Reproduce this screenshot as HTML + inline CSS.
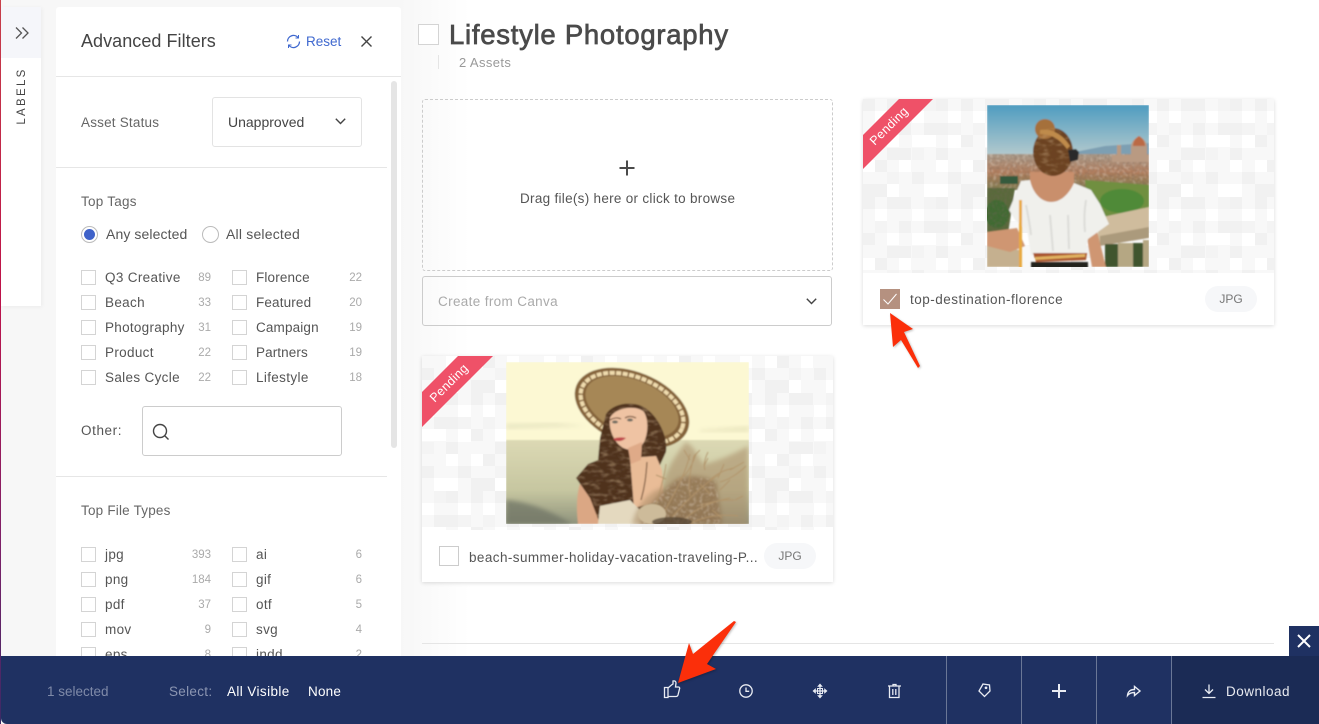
<!DOCTYPE html>
<html><head><meta charset="utf-8"><style>
html,body{margin:0;padding:0;width:1319px;height:724px;overflow:hidden;background:#fff;font-family:"Liberation Sans",sans-serif}
.a{position:absolute}
.t{position:absolute;white-space:nowrap;line-height:20px;height:20px;font-size:13.5px;color:#555;margin-top:1px;letter-spacing:.33px}
.c{position:absolute;font-size:11.5px;color:#aaa;line-height:20px;height:20px;text-align:right;width:40px;margin-top:1px}
.b{position:absolute;width:13px;height:13px;border:1px solid #d4d4d4;background:#fff}
.w{color:#fff}
</style></head><body>
<div class="a" style="left:0;top:0;width:470px;height:724px;background:linear-gradient(90deg,#f7f7f7 0,#f7f7f7 400px,#fff 470px)"></div>
<div class="a" style="left:0;top:0;width:1px;height:724px;background:linear-gradient(180deg,#c9404a 0,#c0134a 40%,#7e2068 75%,#3b2a66 100%)"></div>
<!-- labels panel -->
<div class="a" style="left:1px;top:7px;width:40px;height:299px;background:#fff;box-shadow:1px 1px 4px rgba(0,0,0,.05)"></div>
<div class="a" style="left:1px;top:7px;width:40px;height:51px;background:#f5f6fa"></div>
<svg class="a" style="left:15px;top:26px" width="16" height="14" fill="none" stroke="#555" stroke-width="1.3"><path d="M1 1.5l5.5 5.5L1 12.500M7.500 1.500L13 7l-5.500 5.500"/></svg>
<div class="t" style="left:-8px;top:86px;width:60px;text-align:center;font-size:11.500px;letter-spacing:2.300px;color:#444;transform:rotate(-90deg);margin-top:0">LABELS</div>
<!-- filter panel -->
<div class="a" style="left:56px;top:7px;width:345px;height:660px;background:#fff;border-radius:3px 3px 0 0"></div>
<div class="a" style="left:56px;top:76px;width:345px;height:1px;background:#e6e6e6"></div>
<div class="a" style="left:56px;top:167px;width:331px;height:1px;background:#e6e6e6"></div>
<div class="a" style="left:56px;top:476px;width:331px;height:1px;background:#e6e6e6"></div>
<div class="a" style="left:391px;top:81px;width:6px;height:367px;background:#e5e5e5;border-radius:3px"></div>
<div class="t" style="left:81px;top:31px;font-size:18px;color:#444;letter-spacing:.05px;margin-top:0">Advanced Filters</div>
<svg class="a" style="left:286px;top:34px" width="15" height="15" fill="none" stroke="#3f68cf" stroke-width="1.300"><path d="M1.500 7.500a6 6 0 0 1 10.500-4M13.500 7.500a6 6 0 0 1-10.500 4"/><path d="M12.500 1v3h-3M2.500 14v-3h3" stroke-width="1"/></svg>
<div class="t" style="left:306px;top:31px;font-size:13.500px;color:#3f68cf;letter-spacing:0">Reset</div>
<svg class="a" style="left:361px;top:36px" width="11" height="11" stroke="#444" stroke-width="1.400"><path d="M.5.500l10 10M10.500.500l-10 10"/></svg>
<div class="t" style="left:81px;top:112px;color:#666;letter-spacing:.2px">Asset Status</div>
<div class="a" style="left:212px;top:97px;width:148px;height:48px;border:1px solid #e3e3e3;border-radius:3px"></div>
<div class="t" style="left:228px;top:112px;color:#444;font-size:14px;margin-top:0;letter-spacing:0">Unapproved</div>
<svg class="a" style="left:335px;top:118px" width="11" height="7" fill="none" stroke="#444" stroke-width="1.400"><path d="M.8.800l4.700 4.700L10.200.800"/></svg>
<div class="t" style="left:81px;top:191px;color:#666;letter-spacing:.25px">Top Tags</div>
<div class="a" style="left:81px;top:226px;width:15px;height:15px;border:1px solid #bbb;border-radius:50%"></div>
<div class="a" style="left:84px;top:229px;width:11px;height:11px;background:#3f62c9;border-radius:50%"></div>
<div class="t" style="left:106px;top:224px;color:#555;font-size:14px;margin-top:0;letter-spacing:.1px">Any selected</div>
<div class="a" style="left:202px;top:226px;width:15px;height:15px;border:1px solid #bbb;border-radius:50%"></div>
<div class="t" style="left:226px;top:224px;color:#555;font-size:14px;margin-top:0;letter-spacing:.2px">All selected</div>

<div class="b" style="left:81px;top:270px"></div><div class="t" style="left:105px;top:267px">Q3 Creative</div><div class="c" style="left:171px;top:267px">89</div>
<div class="b" style="left:232px;top:270px"></div><div class="t" style="left:256px;top:267px;letter-spacing:.15px">Florence</div><div class="c" style="left:322px;top:267px">22</div>
<div class="b" style="left:81px;top:295px"></div><div class="t" style="left:105px;top:292px">Beach</div><div class="c" style="left:171px;top:292px">33</div>
<div class="b" style="left:232px;top:295px"></div><div class="t" style="left:256px;top:292px;letter-spacing:.15px">Featured</div><div class="c" style="left:322px;top:292px">20</div>
<div class="b" style="left:81px;top:320px"></div><div class="t" style="left:105px;top:317px;letter-spacing:.28px">Photography</div><div class="c" style="left:171px;top:317px">31</div>
<div class="b" style="left:232px;top:320px"></div><div class="t" style="left:256px;top:317px;letter-spacing:.15px">Campaign</div><div class="c" style="left:322px;top:317px">19</div>
<div class="b" style="left:81px;top:345px"></div><div class="t" style="left:105px;top:342px">Product</div><div class="c" style="left:171px;top:342px">22</div>
<div class="b" style="left:232px;top:345px"></div><div class="t" style="left:256px;top:342px;letter-spacing:.1px">Partners</div><div class="c" style="left:322px;top:342px">19</div>
<div class="b" style="left:81px;top:370px"></div><div class="t" style="left:105px;top:367px">Sales Cycle</div><div class="c" style="left:171px;top:367px">22</div>
<div class="b" style="left:232px;top:370px"></div><div class="t" style="left:256px;top:367px;letter-spacing:.35px">Lifestyle</div><div class="c" style="left:322px;top:367px">18</div>

<div class="t" style="left:81px;top:420px;letter-spacing:.6px">Other:</div>
<div class="a" style="left:142px;top:406px;width:198px;height:48px;border:1px solid #ccc;border-radius:3px"></div>
<svg class="a" style="left:152px;top:423px" width="18" height="18" fill="none" stroke="#444" stroke-width="1.400"><circle cx="8" cy="8" r="6.500"/><path d="M12.500 12.500l4 4"/></svg>
<div class="t" style="left:81px;top:500px;color:#666;letter-spacing:.2px">Top File Types</div>

<div class="b" style="left:81px;top:547px"></div><div class="t" style="left:105px;top:544px">jpg</div><div class="c" style="left:171px;top:544px">393</div>
<div class="b" style="left:232px;top:547px"></div><div class="t" style="left:256px;top:544px">ai</div><div class="c" style="left:322px;top:544px">6</div>
<div class="b" style="left:81px;top:572px"></div><div class="t" style="left:105px;top:569px">png</div><div class="c" style="left:171px;top:569px">184</div>
<div class="b" style="left:232px;top:572px"></div><div class="t" style="left:256px;top:569px">gif</div><div class="c" style="left:322px;top:569px">6</div>
<div class="b" style="left:81px;top:597px"></div><div class="t" style="left:105px;top:594px">pdf</div><div class="c" style="left:171px;top:594px">37</div>
<div class="b" style="left:232px;top:597px"></div><div class="t" style="left:256px;top:594px">otf</div><div class="c" style="left:322px;top:594px">5</div>
<div class="b" style="left:81px;top:622px"></div><div class="t" style="left:105px;top:619px">mov</div><div class="c" style="left:171px;top:619px">9</div>
<div class="b" style="left:232px;top:622px"></div><div class="t" style="left:256px;top:619px">svg</div><div class="c" style="left:322px;top:619px">4</div>
<div class="b" style="left:81px;top:647px"></div><div class="t" style="left:105px;top:644px">eps</div><div class="c" style="left:171px;top:644px">8</div>
<div class="b" style="left:232px;top:647px"></div><div class="t" style="left:256px;top:644px">indd</div><div class="c" style="left:322px;top:644px">2</div>

<!-- main -->
<div class="a" style="left:418px;top:24px;width:19px;height:19px;border:1px solid #d4d4d4;background:#fff"></div>
<div class="t" style="left:449px;top:19px;height:32px;line-height:32px;font-size:27.500px;color:#4a4a4a;-webkit-text-stroke:.7px #4a4a4a;letter-spacing:.73px;margin-top:0">Lifestyle Photography</div>
<div class="a" style="left:438px;top:55px;width:1px;height:14px;background:#e5e5e5"></div>
<div class="t" style="left:459px;top:52px;color:#999;font-size:13px;letter-spacing:.4px">2 Assets</div>
<div class="a" style="left:422px;top:99px;width:409px;height:170px;border:1px dashed #ccc;border-radius:3px"></div>
<svg class="a" style="left:619px;top:160px" width="16" height="16" stroke="#4a4a4a" stroke-width="2"><path d="M8 .5v15M.5 8h15"/></svg>
<div class="t" style="left:520px;top:188px;color:#555;font-size:13.500px;letter-spacing:.29px">Drag file(s) here or click to browse</div>
<div class="a" style="left:422px;top:276px;width:408px;height:48px;border:1px solid #ccc;border-radius:3px"></div>
<div class="t" style="left:438px;top:291px;color:#aaa;font-size:13.500px;letter-spacing:.35px">Create from Canva</div>
<svg class="a" style="left:806px;top:298px" width="11" height="7" fill="none" stroke="#444" stroke-width="1.400"><path d="M.8.800l4.700 4.700L10.200.800"/></svg>
<div class="a" style="left:422px;top:643px;width:852px;height:1px;background:#e5e5e5"></div>

<!-- cards -->
<div class="a" style="left:863px;top:99px;width:411px;height:226px;background:#fff;box-shadow:0 1px 4px rgba(0,0,0,.14)"></div>
<div class="a" style="left:422px;top:356px;width:411px;height:226px;background:#fff;box-shadow:0 1px 4px rgba(0,0,0,.14)"></div>

<svg class="a" style="left:0;top:0" width="1319" height="724" viewBox="0 0 1319 724">
<defs>
<pattern id="chk" width="98" height="98" patternUnits="userSpaceOnUse" patternTransform="translate(863 99)">
<rect width="98" height="98" fill="#f8f8f8"/>
<g fill="#f1f1f1">
<rect x="0" y="0" width="12" height="12"/><rect x="24" y="0" width="24" height="12"/><rect x="73" y="0" width="12" height="12"/>
<rect x="36" y="24" width="12" height="12"/><rect x="61" y="24" width="24" height="12"/><rect x="0" y="36" width="12" height="12"/>
<rect x="24" y="49" width="24" height="12"/><rect x="73" y="49" width="12" height="12"/><rect x="12" y="61" width="12" height="12"/>
<rect x="49" y="73" width="12" height="12"/><rect x="85" y="73" width="13" height="12"/><rect x="0" y="85" width="24" height="13"/>
</g>
<g fill="#f4f4f4">
<rect x="12" y="24" width="12" height="12"/><rect x="61" y="0" width="12" height="12"/><rect x="49" y="49" width="12" height="12"/><rect x="24" y="73" width="12" height="12"/><rect x="85" y="24" width="13" height="12"/>
</g>
<g fill="#ffffff">
<rect x="12" y="12" width="12" height="12"/><rect x="49" y="12" width="12" height="12"/><rect x="85" y="12" width="13" height="12"/>
<rect x="24" y="36" width="12" height="12"/><rect x="49" y="36" width="24" height="12"/><rect x="85" y="36" width="13" height="13"/>
<rect x="0" y="61" width="12" height="12"/><rect x="36" y="61" width="12" height="12"/><rect x="73" y="61" width="12" height="12"/>
<rect x="24" y="85" width="12" height="13"/><rect x="61" y="85" width="24" height="13"/>
</g>
</pattern>
<linearGradient id="sky" x1="0" y1="0" x2="0" y2="1"><stop offset="0" stop-color="#4e9cc0"/><stop offset="1" stop-color="#b3c9cd"/></linearGradient>
<linearGradient id="city" x1="0" y1="0" x2="0" y2="1"><stop offset="0" stop-color="#a89a8a"/><stop offset=".5" stop-color="#b07c5c"/><stop offset="1" stop-color="#7d7a4e"/></linearGradient>
<linearGradient id="sand" x1="0" y1="0" x2="0" y2="1"><stop offset="0" stop-color="#dcd9b4"/><stop offset=".6" stop-color="#c6c6a0"/><stop offset="1" stop-color="#8f937c"/></linearGradient>
<clipPath id="p1"><rect x="987" y="105" width="162" height="162"/></clipPath>
<clipPath id="p2"><rect x="506" y="362" width="243" height="162"/></clipPath>
<filter id="soft"><feGaussianBlur stdDeviation=".7"/></filter>
<filter id="soft2"><feGaussianBlur stdDeviation="2"/></filter>
<filter id="noise" x="0" y="0" width="100%" height="100%"><feTurbulence type="fractalNoise" baseFrequency=".4" numOctaves="2" seed="4"/><feColorMatrix values="0 0 0 0 .18  0 0 0 0 .13  0 0 0 0 .1  0 0 0 3.500 -1.500"/><feComposite in2="SourceAlpha" operator="in"/></filter>
<filter id="noiseL" x="0" y="0" width="100%" height="100%"><feTurbulence type="fractalNoise" baseFrequency=".3" numOctaves="2" seed="9"/><feColorMatrix values="0 0 0 0 .95  0 0 0 0 .88  0 0 0 0 .78  0 0 0 3.500 -1.700"/><feComposite in2="SourceAlpha" operator="in"/></filter>
<filter id="hairN" x="0" y="0" width="100%" height="100%"><feTurbulence type="fractalNoise" baseFrequency=".12 .3" numOctaves="2" seed="7"/><feColorMatrix values="0 0 0 0 .8  0 0 0 0 .6  0 0 0 0 .35  0 0 0 3 -1.500"/><feComposite in2="SourceAlpha" operator="in"/></filter>
</defs>
<rect x="863" y="99" width="411" height="174" fill="url(#chk)"/>
<rect x="422" y="356" width="411" height="174" fill="url(#chk)"/>

<!-- Florence photo -->
<g clip-path="url(#p1)"><g filter="url(#soft)">
<rect x="987" y="105" width="162" height="50" fill="url(#sky)"/>
<path d="M1075 152l30-6 44-3v14h-74z" fill="#7d9fb2"/>
<rect x="987" y="154" width="162" height="36" fill="url(#city)"/>
<rect x="987" y="154" width="162" height="36" fill="#000" filter="url(#noise)" opacity=".3"/>
<rect x="987" y="154" width="162" height="36" fill="#000" filter="url(#noiseL)" opacity=".3"/>
<path d="M1112 155h5v-10h4v10h10v-8c0-5 4-9 8-11 4 2 8 6 8 11v8h2v7h-37z" fill="#b99a82"/>
<path d="M1133 146c0-5 3-8 6-10 3 2 6 5 6 10z" fill="#bb6a45"/>
<path d="M1085 180l64 5v30l-60 5z" fill="#6f8f3f"/>
<ellipse cx="1122" cy="201" rx="22" ry="12" fill="#4f8a38"/>
<path d="M987 188h28l-8 52h-20z" fill="#58693a"/>
<ellipse cx="997" cy="214" rx="12" ry="14" fill="#3f6a31"/>
<path d="M1000 176h18v8h-18z" fill="#355a3e"/>
<path d="M987 188h28l-8 52h-20z" fill="#000" filter="url(#noise)" opacity=".35"/>
<path d="M1098 218l51-11v25l-51 11z" fill="#cfbc9d"/>
<path d="M1100 236l49-9v11l-49 8z" fill="#ab9a7b"/>
<path d="M987 244l32 6v17h-32z" fill="#c5b08f"/>
<rect x="1118" y="243" width="15" height="24" fill="#b5a783"/>
<rect x="1143" y="240" width="6" height="27" fill="#b5a783"/>
<rect x="1105" y="244" width="13" height="23" fill="#41552f"/>
<rect x="1133" y="243" width="10" height="24" fill="#41552f"/>
<!-- arms and back skin -->
<path d="M987 232l30-4 8 18-15 6-23-6z" fill="#cf9672"/>
<path d="M1086 232l11-1 9 36h-14z" fill="#cf9672"/>
<path d="M1030 172h44v32h-44z" fill="#c98f6c"/>
<!-- shirt -->
<path d="M1021 181l9-1c3 14 12 22 21 22 10 0 18-8 23-19l17 7 9 14 9 20-21 15-3 16h-54l-4-26-12-9-6-10z" fill="#f0f0ec"/>
<path d="M1026 205c2 10 4 20 5 30M1086 200c-2 12-2 22-1 32M1050 215l3 36M1068 215l1 34" stroke="#dcdcd8" stroke-width="2" fill="none"/>
<path d="M1033 253h54l-1 7-50 2z" fill="#a9552f"/>
<path d="M1035 257l50-3 0 3-50 3z" fill="#e1b261"/>
<path d="M1031 262h57v6h-57z" fill="#24201e"/>
<rect x="1019" y="200" width="3" height="68" fill="#e8a93c"/>
<!-- hair -->
<ellipse cx="1053" cy="152" rx="20" ry="24" fill="#6c4322"/>
<circle cx="1045" cy="129" r="10" fill="#a5703a"/>
<ellipse cx="1053" cy="152" rx="20" ry="24" fill="#000" filter="url(#hairN)" opacity=".3"/>
<path d="M1040 130c10-2 22 3 30 16l-3 3c-8-11-17-15-27-15z" fill="#bf8b4b"/>
<path d="M1068 150l8-1 3 3-1 8-8 2z" fill="#2c2a2a"/>
</g></g>

<!-- Beach photo -->
<g clip-path="url(#p2)"><g filter="url(#soft)">
<rect x="506" y="362" width="243" height="80" fill="#fcf8d3"/>
<rect x="506" y="440" width="243" height="84" fill="url(#sand)"/>
<path d="M506 424l50-1 30 3-80 3z" fill="#e9e6c2" filter="url(#soft2)"/>
<path d="M700 430l49-4v6h-49z" fill="#ebe7c0" filter="url(#soft2)"/>
<path d="M506 500c20 2 40 8 66 24h-66z" fill="#6d7263" opacity=".7" filter="url(#soft2)"/>
<!-- hat -->
<ellipse cx="632" cy="408" rx="60" ry="36" transform="rotate(22 632 408)" fill="#85643a"/>
<ellipse cx="632" cy="408" rx="54" ry="31" transform="rotate(22 632 408)" fill="none" stroke="#f0dcae" stroke-width="4" stroke-dasharray="5 1.500"/>
<ellipse cx="632" cy="407" rx="49" ry="27" transform="rotate(22 632 407)" fill="#a68756"/>
<!-- body -->
<path d="M578 524c-3-26 0-50 16-62l16 6-6 56z" fill="#dba784"/>
<!-- hair -->
<path d="M606 414c8-12 30-14 42-4 12 10 20 28 18 42l-12 26-8 46h-46l-10-26-14-20 12-14 10-4 2-22z" fill="#4f331f"/>
<path d="M606 414c8-12 30-14 42-4 12 10 20 28 18 42l-12 26-8 46h-46l-10-26-14-20 12-14 10-4 2-22z" fill="#000" filter="url(#hairN)" opacity=".4"/>
<!-- chest -->
<path d="M630 458l26-2 6 14 2 30-30 8z" fill="#e9bc97"/>
<path d="M647 462c-1 14-2 24-6 38" stroke="#7a5a40" stroke-width="1.200" fill="none"/>
<!-- dress -->
<path d="M598 524l2-18 30-6 24 24z" fill="#e4d9bf"/>
<!-- face -->
<path d="M610 418c4-10 26-14 34-6 5 8 4 22 0 30-4 7-12 9-18 7-10-3-18-18-16-31z" fill="#efc3a3"/>
<path d="M628 448l14-6-1 18-10 4z" fill="#dfaa88"/>
<path d="M610 420c3-2 8-3 11-1M625 418c3-2 7-2 11 0" stroke="#6a4a34" stroke-width="1.100" fill="none"/>
<ellipse cx="615" cy="422" rx="3" ry="1.500" fill="#6d6a60"/><ellipse cx="630" cy="420" rx="3" ry="1.500" fill="#6d6a60"/>
<path d="M613 439c4-2 9-2 13-1-4 4-10 4-13 1z" fill="#c0474b"/>
<!-- flowers -->
<path d="M632 524c4-18 18-34 30-36 4-18 14-34 24-46 10 6 12 16 18 22 12-2 30-10 44-18v102z" fill="#a98c68" opacity=".55" filter="url(#soft2)"/>
<path d="M640 524c8-20 24-34 36-44 10-6 28-4 40 2l6 42z" fill="#8f7150" opacity=".8" filter="url(#soft2)"/>
<path d="M640 524c8-20 24-34 36-44 10-6 28-4 40 2l6 42z" fill="#000" filter="url(#noiseL)" opacity=".3"/>
<g fill="none" stroke="#b2946a" stroke-width="1" opacity=".95">
<path d="M660 520c10-20 24-40 30-66M670 520c14-18 34-36 50-46M680 524c12-14 30-22 50-26M650 524c6-20 14-44 16-60M690 524c14-8 30-10 48-8M690 496c-2-14 0-24 4-40M710 480c6-6 14-10 24-12M676 480c10-2 16-14 20-26M700 505c10-2 20-6 34-5M705 470c-2-6 0-12 3-18M720 482c8-2 18-8 26-16"/>
<path d="M684 450l6 10M730 470l14-8M718 478l6-14M656 475l10 4M700 484l10 10M720 490l10-10M712 510l10 8M735 500l8-4M694 456l6-6M708 458l-4 8"/>
</g>
<ellipse cx="652" cy="514" rx="14" ry="10" fill="#cdbb9a"/>
<ellipse cx="672" cy="522" rx="20" ry="5" fill="#4a3c2c" opacity=".7"/>
</g></g>

<!-- ribbons -->
<path d="M899 99h34l-70 70v-34z" fill="#ef5168"/>
<path d="M458 356h35l-71 71v-35z" fill="#ef5168"/>
</svg>

<div class="t" style="left:859px;top:116px;width:60px;text-align:center;color:#fff;font-size:12.500px;transform:rotate(-45deg);margin-top:0">Pending</div>
<div class="t" style="left:419px;top:373px;width:60px;text-align:center;color:#fff;font-size:12.500px;transform:rotate(-45deg);margin-top:0">Pending</div>

<div class="a" style="left:880px;top:289px;width:20px;height:20px;background:#b59180"></div>
<svg class="a" style="left:880px;top:289px" width="20" height="20" fill="none" stroke="#fff" stroke-width="1"><path d="M3.500 10.500l4.500 4.500 8.500-10"/></svg>
<div class="t" style="left:910px;top:289px;font-size:13.500px;color:#555;letter-spacing:.5px">top-destination-florence</div>
<div class="a" style="left:1205px;top:286px;width:52px;height:26px;border-radius:13px;background:#f6f7f9;color:#777;font-size:12px;line-height:26px;text-align:center">JPG</div>

<div class="a" style="left:439px;top:546px;width:18px;height:18px;border:1px solid #ccc;background:#fff"></div>
<div class="t" style="left:469px;top:547px;font-size:13.500px;color:#555;letter-spacing:.42px">beach-summer-holiday-vacation-traveling-P...</div>
<div class="a" style="left:764px;top:543px;width:52px;height:26px;border-radius:13px;background:#f6f7f9;color:#777;font-size:12px;line-height:26px;text-align:center">JPG</div>

<!-- bottom bar -->
<div class="a" style="left:1289px;top:626px;width:30px;height:30px;background:#1f3162"></div>
<svg class="a" style="left:1297px;top:634px" width="14" height="14" stroke="#fff" stroke-width="2"><path d="M1 1l12 12M13 1L1 13"/></svg>
<div class="a" style="left:1px;top:656px;width:1318px;height:68px;background:#1f3162;border-radius:0 0 0 6px"></div>
<div class="a" style="left:1171px;top:656px;width:148px;height:68px;background:#1b2b55"></div>
<div class="a" style="left:946px;top:656px;width:1px;height:68px;background:#6a7796"></div>
<div class="a" style="left:1021px;top:656px;width:1px;height:68px;background:#6a7796"></div>
<div class="a" style="left:1096px;top:656px;width:1px;height:68px;background:#6a7796"></div>
<div class="a" style="left:1171px;top:656px;width:1px;height:68px;background:#6a7796"></div>
<div class="t" style="left:47px;top:681px;color:#7f8aa8;font-size:13.500px;letter-spacing:0">1 selected</div>
<div class="t" style="left:169px;top:681px;color:#8c96b2;font-size:13.500px;letter-spacing:.3px">Select:</div>
<div class="t w" style="left:227px;top:681px;font-size:13.500px;letter-spacing:.4px">All Visible</div>
<div class="t w" style="left:308px;top:681px;font-size:13.500px;letter-spacing:.2px">None</div>
<div class="t w" style="left:1226px;top:681px;font-size:13.500px;color:#e8eaf0;letter-spacing:.5px">Download</div>

<svg class="a" style="left:0;top:656px" width="1319" height="68" viewBox="0 656 1319 68" fill="none" stroke="#e9ecf3" stroke-width="1.300">
<path d="M664.500 687.500h3.500v10h-3.500zM668 688l3.500-3 1.500-1v-3c2-.5 3 .5 3 2l-.5 4h3c1 0 1.500 1 1 2l-1.500 6c-.3 1-1 1.500-2 1.500h-8"/>
<circle cx="746" cy="691" r="6.200"/><path d="M746 687.500v3.800h3.200"/>
<path d="M820 686v10M815 691h10" stroke-width="1.300"/><path d="M820 684l-2.200 2.500h4.400zM820 698l-2.200-2.500h4.400zM813 691l2.500-2.200v4.400zM827 691l-2.500-2.200v4.400z" fill="#e9ecf3" stroke-width=".6"/><rect x="817.500" y="688.500" width="5" height="5" stroke-width="1"/>
<path d="M888 686h13M893 686v-1.500h3v1.500M889.500 686.500v11h9.500v-11M892.800 689v6M895.800 689v6"/>
<path d="M982 684.500l6.500 1 .5 6-5.500 5.500-5.500-5.500z" transform="translate(1 -.5)"/><circle cx="986" cy="687.800" r=".7" fill="#e9ecf3"/>
<path d="M1052 691h14M1059 684v14" stroke-width="2"/>
<path d="M1127.500 695.500c.3-4 3-6 7-6v-3l5.500 4.500-5.500 4.500v-3c-3 0-5 .5-7 3z" stroke-width="1.400"/>
<path d="M1209 684.500v9M1205 689.500l4 4 4-4M1202.500 697.500h13"/>
</svg>

<!-- red arrows -->
<svg class="a" style="left:0;top:0;filter:drop-shadow(1px 1px 1px rgba(0,0,0,.25))" width="1319" height="724" viewBox="0 0 1319 724">
<path d="M890 313l23 16-9 3 16 34-2 2-17-28-8 7z" fill="#fb2f0a"/>
<path d="M678 683l11-40 4 11 41-33 2 1-29 42 9 5z" fill="#fb2f0a"/>
</svg>
</body></html>
